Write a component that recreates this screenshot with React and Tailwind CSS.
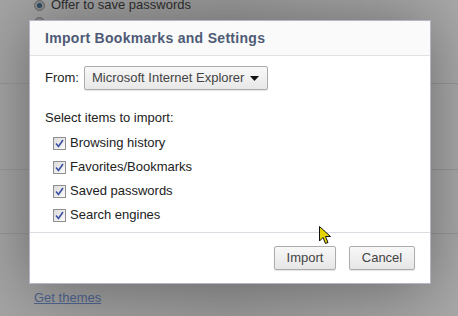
import { useState } from 'react';

const items = ['Browsing history', 'Favorites/Bookmarks', 'Saved passwords', 'Search engines'];

const Check = ({ checked, onToggle }) => (
  <button
    type="button"
    onClick={onToggle}
    className="w-[13px] h-[13px] border border-[#8e8f8f] bg-gradient-to-br from-[#dcdcdc] to-[#fbfbfb] flex items-center justify-center p-0"
  >
    {checked && (
      <svg width="9" height="9" viewBox="0 0 9 9">
        <path d="M1 4.5 L3.5 7.5 L8 1" fill="none" stroke="#3a4fa0" strokeWidth="1.6" />
      </svg>
    )}
  </button>
);

const App = () => {
  const [checked, setChecked] = useState(items.map(() => true));

  return (
    <div className="relative w-[458px] h-[316px] overflow-hidden bg-gradient-to-r from-[#a4a4a4] via-[#9a9a9a] to-[#a8a8a8] font-['Liberation_Sans',Arial,sans-serif] text-[13px]">
      {/* page behind the overlay */}
      <div className="flex flex-col">
        <div className="flex items-center gap-[6px] pl-[34px] h-[14px] -mt-[2px]">
          <span className="w-[11px] h-[11px] rounded-full border border-[#6b6b6b] bg-[#8a8a8a] flex items-center justify-center">
            <span className="w-[5px] h-[5px] rounded-full bg-[#2d4d66]" />
          </span>
          <span className="text-[#2e2e2e]">Offer to save passwords</span>
        </div>
        <div className="pl-[34px] pt-[5px]">
          <span className="block w-[11px] h-[11px] rounded-full border border-[#6b6b6b] bg-[#8a8a8a]" />
        </div>
        <div className="h-[56px] border-b border-[#979797]" />
        <div className="h-[86px] border-b border-[#979797]" />
        <div className="h-[64px] border-b border-[#979797]" />
        <div className="pl-[34px] pt-[54px]">
          <span className="text-[#4f6591] underline">Get themes</span>
        </div>
      </div>

      {/* dialog */}
      <div className="absolute left-[29px] top-[20px] w-[402px] h-[264px] bg-white border border-[#b3b6c6] shadow-[0_4px_60px_rgba(0,0,0,0.35)] flex flex-col">
        <div className="h-[35px] bg-[#fafafa] border-b border-[#e2e2e6] flex items-center pl-[15px]">
          <h2 className="text-[14px] font-bold text-[#4e5a76] tracking-[0.3px]">Import Bookmarks and Settings</h2>
        </div>

        <div className="flex-1 pl-[15px] pt-[10px] text-[#222]">
          <div className="flex items-center gap-[5px]">
            <span>From:</span>
            <div className="w-[184px] h-[24px] border border-[#acacac] rounded-[2px] bg-gradient-to-b from-[#f8f8f8] to-[#e8e8e8] shadow-[0_1px_1px_rgba(0,0,0,0.1)] flex items-center justify-between pl-[7px] pr-[8px] text-[#444]">
              <span>Microsoft Internet Explorer</span>
              <svg width="9" height="5" viewBox="0 0 9 5">
                <path d="M0 0 H9 L4.5 5 Z" fill="#111" />
              </svg>
            </div>
          </div>

          <p className="mt-[18px]">Select items to import:</p>
          <div className="flex flex-col gap-[9px] mt-[8px] pl-[8px]">
            {items.map((label, i) => (
              <label key={label} className="flex items-center gap-[4px] h-[15px]">
                <Check
                  checked={checked[i]}
                  onToggle={() => setChecked((c) => c.map((v, j) => (j === i ? !v : v)))}
                />
                <span>{label}</span>
              </label>
            ))}
          </div>
        </div>

        <div className="h-[51px] border-t border-[#dcdce2] flex items-center justify-end gap-[13px] pr-[15px]">
          <button className="w-[62px] h-[24px] border border-[#acacac] rounded-[2px] bg-gradient-to-b from-[#f8f8f8] to-[#e6e6e6] shadow-[0_1px_1px_rgba(0,0,0,0.1)] text-[#444]">
            Import
          </button>
          <button className="w-[66px] h-[24px] border border-[#acacac] rounded-[2px] bg-gradient-to-b from-[#f8f8f8] to-[#e6e6e6] shadow-[0_1px_1px_rgba(0,0,0,0.1)] text-[#444]">
            Cancel
          </button>
        </div>
      </div>

      {/* mouse cursor */}
      <svg className="absolute left-[319px] top-[226px]" width="13" height="20" viewBox="0 0 13 20">
        <path d="M0.5 0.5 L0.5 15 L4 11.5 L6.5 17.5 L9 16.5 L6.5 10.5 L11.5 10.5 Z" fill="#e4d400" stroke="#111" strokeWidth="1" strokeLinejoin="round" />
      </svg>
    </div>
  );
};

export default App;
